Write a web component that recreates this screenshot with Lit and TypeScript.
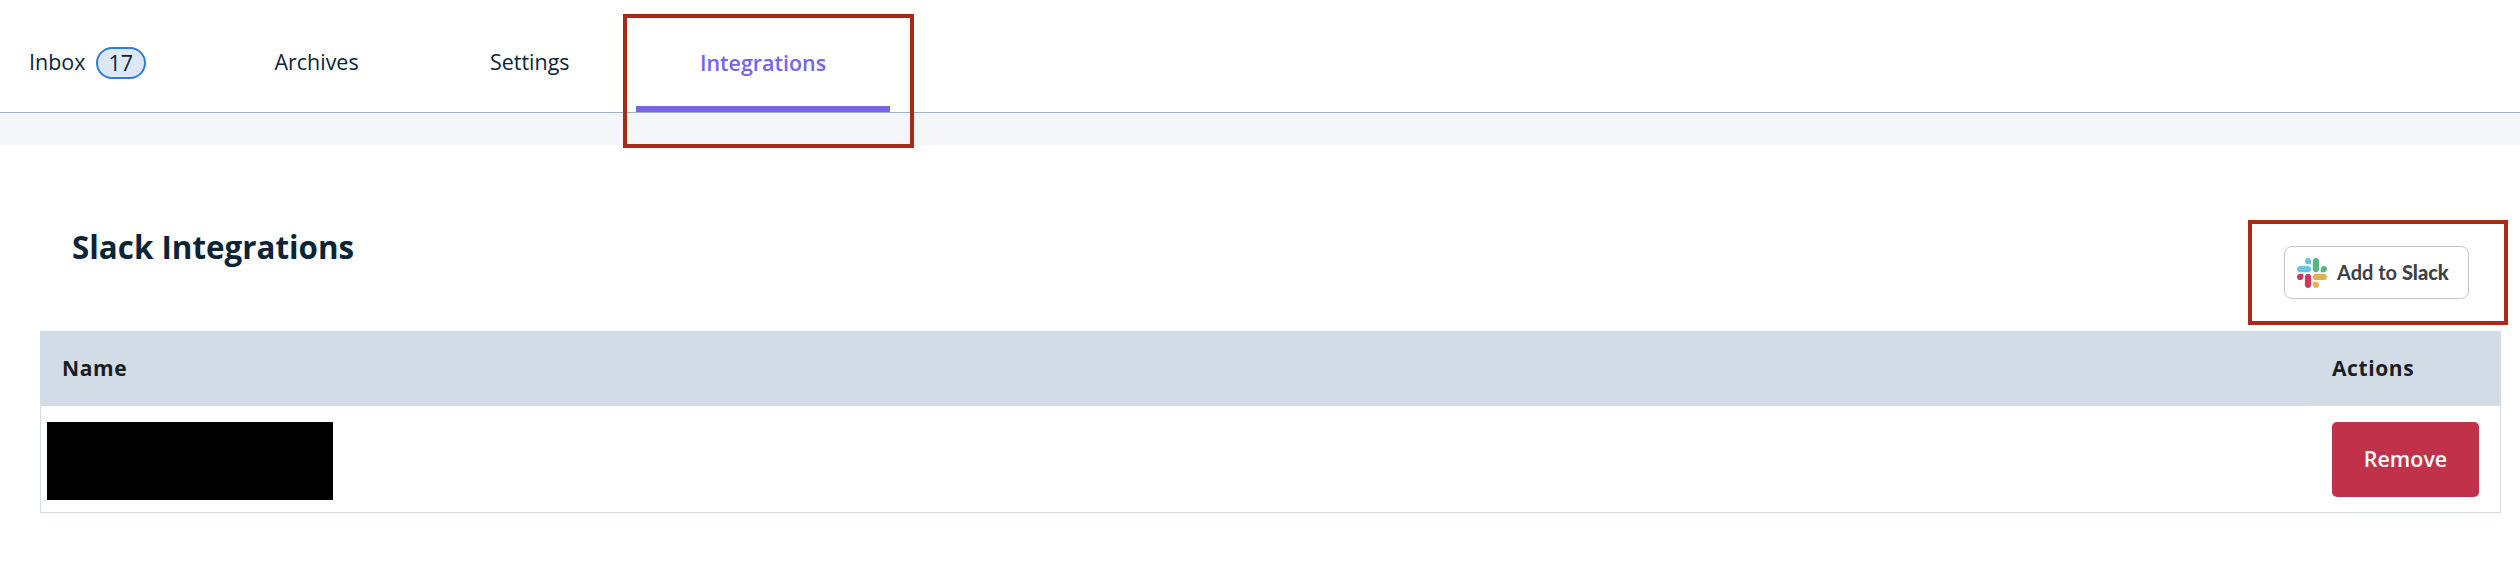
import { LitElement, html, css } from "lit";
import { customElement } from "lit/decorators.js";

@customElement("slack-logo")
class SlackLogo extends LitElement {
  static styles = css`
    :host { display: block; width: 30px; height: 30px; }
    svg { display: block; }
  `;
  render() {
    return html`<svg width="30" height="30" viewBox="0 0 122.8 122.8">
      <path fill="#ce375c" d="M25.8 77.6c0 7.1-5.8 12.9-12.9 12.9S0 84.7 0 77.6s5.8-12.9 12.9-12.9h12.9v12.9zm6.5 0c0-7.1 5.8-12.9 12.9-12.9s12.9 5.8 12.9 12.9v32.3c0 7.1-5.8 12.9-12.9 12.9s-12.9-5.8-12.9-12.9V77.6z"/>
      <path fill="#63c4ec" d="M45.2 25.8c-7.1 0-12.9-5.8-12.9-12.9S38.1 0 45.2 0s12.9 5.8 12.9 12.9v12.9H45.2zm0 6.5c7.1 0 12.9 5.8 12.9 12.9s-5.8 12.9-12.9 12.9H12.9C5.8 58.1 0 52.3 0 45.2s5.8-12.9 12.9-12.9h32.3z"/>
      <path fill="#58b582" d="M97 45.2c0-7.1 5.8-12.9 12.9-12.9s12.9 5.8 12.9 12.9-5.8 12.9-12.9 12.9H97V45.2zm-6.5 0c0 7.1-5.8 12.9-12.9 12.9s-12.9-5.8-12.9-12.9V12.9C64.7 5.8 70.5 0 77.6 0s12.9 5.8 12.9 12.9v32.3z"/>
      <path fill="#e4b04b" d="M77.6 97c7.1 0 12.9 5.8 12.9 12.9s-5.8 12.9-12.9 12.9-12.9-5.8-12.9-12.9V97h12.9zm0-6.5c-7.1 0-12.9-5.8-12.9-12.9s5.8-12.9 12.9-12.9h32.3c7.1 0 12.9 5.8 12.9 12.9s-5.8 12.9-12.9 12.9H77.6z"/>
    </svg>`;
  }
}

@customElement("app-root")
class AppRoot extends LitElement {
  static styles = css`
    :host {
      display: block;
      height: 566px;
      overflow: hidden;
      position: relative;
      background: #fff;
      color: #0b2537;
      font: 21.45px/28px "Open Sans", sans-serif;
    }
    * { box-sizing: border-box; }
    .tabs { display: grid; grid-template-columns: 181px 246px 209px 254px; height: 113px; padding-left: 29px; border-bottom: 1px solid #9fb1ce; }
    .tabs { grid-template-columns: 181px 215px 211px 254px; }
    .tab { display: flex; height: 112px; padding: 48px 0 0 64.5px; white-space: nowrap; }
    .inbox { padding-left: 0; }
    .settings { padding-left: 65px; }
    .active {
      justify-content: center;
      padding: 49px 0 0;
      border-bottom: 6px solid #7864e8;
      color: #7864e8;
      font-weight: 600;
    }
    .badge {
      width: 50px;
      height: 32px;
      margin: -1px 0 0 10.5px;
      border: 2px solid #2f7cdd;
      border-radius: 16px;
      background: #dce8f8;
      line-height: 28px;
      text-align: center;
    }
    .strip { height: 32px; background: #f5f6fa; }
    .heading { display: flex; justify-content: space-between; height: 186px; padding: 82px 51px 0 72px; }
    h1 { margin: 0; font-size: 31.35px; line-height: 40px; font-weight: 700; }
    .slack {
      display: flex;
      align-items: center;
      width: 185px;
      height: 53px;
      margin-top: 19px;
      padding: 0 0 0 11px;
      border: 1px solid #c3c5c7;
      border-radius: 8px;
      background: #fff;
      color: #3f4046;
      font: 700 20px/28px Lato, sans-serif;
      white-space: pre;
    }
    .slack span { padding-bottom: 1px; }
    .slack b { font-weight: 900; }
    slack-logo { margin: 0 10px 0 1px; }
    .table { width: 2461px; height: 182px; margin-left: 40px; border: 1px solid #d2dce6; }
    .row { display: grid; grid-template-columns: 1fr 189px; }
    .head { height: 74px; background: #d2dce6; color: #1b1d1f; font-size: 21px; font-weight: 700; letter-spacing: 0.6px; }
    .head > div { padding: 22px 21px 0; }
    .head > .col { height: 74px; border-bottom: 1px solid #dedfe3; }
    .body { height: 106px; padding-top: 16px; }
    .redacted { width: 286px; height: 78px; margin-left: 6px; background: #000; }
    .remove {
      width: 147px;
      height: 75px;
      margin-left: 21px;
      padding: 0;
      border: 0;
      border-radius: 5px;
      background: #c13149;
      color: #fff;
      font: 600 21.45px/74px "Open Sans", sans-serif;
      text-align: center;
      padding-bottom: 1px;
    }
    .mark { position: absolute; border: 4px solid #a82a17; pointer-events: none; }
    .mark-tab { left: 623px; top: 14px; width: 291px; height: 134px; }
    .mark-slack { left: 2248px; top: 220px; width: 260px; height: 105px; }
  `;
  render() {
    return html`
      <nav class="tabs">
        <div class="tab inbox">Inbox<span class="badge">17</span></div>
        <div class="tab archives">Archives</div>
        <div class="tab settings">Settings</div>
        <div class="tab active">Integrations</div>
      </nav>
      <div class="strip"></div>
      <div class="heading">
        <h1>Slack Integrations</h1>
        <div class="slack"><slack-logo></slack-logo><span>Add to <b>Slack</b></span></div>
      </div>
      <div class="table">
        <div class="row head"><div>Name</div><div class="col">Actions</div></div>
        <div class="row body"><div class="redacted"></div><button class="remove">Remove</button></div>
      </div>
      <div class="mark mark-tab"></div>
      <div class="mark mark-slack"></div>
    `;
  }
}
